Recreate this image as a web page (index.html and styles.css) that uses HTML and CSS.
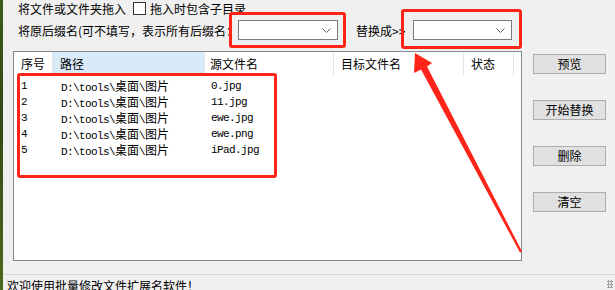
FILE: index.html
```html
<!DOCTYPE html>
<html lang="zh-CN">
<head>
    <meta charset="UTF-8">
    <title>批量修改文件扩展名</title>
    <link rel="stylesheet" href="styles.css">
</head>
<body>
    <div class="desktop"></div>
    <div class="window">
        <div class="row-drop">
            <span>将文件或文件夹拖入</span>
            <span class="checkbox"></span>
            <span>拖入时包含子目录</span>
        </div>

        <div class="row-ext">
            <span class="ext-label">将原后缀名(可不填写，表示所有后缀名：</span>
            <div class="combo combo-from">
                <svg class="chevron" width="9" height="5" viewBox="0 0 9 5"><polyline points="0.5,0.5 4.5,4.5 8.5,0.5" fill="none" stroke="#606060" stroke-width="1"/></svg>
            </div>
            <span class="to-label">替换成&gt;&gt;</span>
            <div class="combo combo-to">
                <svg class="chevron" width="9" height="5" viewBox="0 0 9 5"><polyline points="0.5,0.5 4.5,4.5 8.5,0.5" fill="none" stroke="#606060" stroke-width="1"/></svg>
            </div>
        </div>

        <div class="main">
            <div class="list">
                <div class="list-head">
                    <div class="col c-no">序号</div>
                    <div class="col c-path hover">路径</div>
                    <div class="col c-src">源文件名</div>
                    <div class="col c-dst">目标文件名</div>
                    <div class="col c-state">状态</div>
                </div>
                <div class="list-body">
                    <div class="list-row">
                        <div class="cell c-no">1</div>
                        <div class="cell c-path">D:\tools\<span class="cjk">桌面</span>\<span class="cjk">图片</span></div>
                        <div class="cell c-src">0.jpg</div>
                    </div>
                    <div class="list-row">
                        <div class="cell c-no">2</div>
                        <div class="cell c-path">D:\tools\<span class="cjk">桌面</span>\<span class="cjk">图片</span></div>
                        <div class="cell c-src">11.jpg</div>
                    </div>
                    <div class="list-row">
                        <div class="cell c-no">3</div>
                        <div class="cell c-path">D:\tools\<span class="cjk">桌面</span>\<span class="cjk">图片</span></div>
                        <div class="cell c-src">ewe.jpg</div>
                    </div>
                    <div class="list-row">
                        <div class="cell c-no">4</div>
                        <div class="cell c-path">D:\tools\<span class="cjk">桌面</span>\<span class="cjk">图片</span></div>
                        <div class="cell c-src">ewe.png</div>
                    </div>
                    <div class="list-row">
                        <div class="cell c-no">5</div>
                        <div class="cell c-path">D:\tools\<span class="cjk">桌面</span>\<span class="cjk">图片</span></div>
                        <div class="cell c-src">iPad.jpg</div>
                    </div>
                </div>
            </div>

            <div class="buttons">
                <div class="btn">预览</div>
                <div class="btn">开始替换</div>
                <div class="btn">删除</div>
                <div class="btn">清空</div>
            </div>
        </div>

        <div class="status">欢迎使用批量修改文件扩展名软件！</div>
        <div class="grip"></div>
    </div>

    <!-- red annotations drawn over the screenshot -->
    <div class="mark mark-from"></div>
    <div class="mark mark-to"></div>
    <div class="mark mark-rows"></div>
    <svg class="arrow" width="615" height="290" viewBox="0 0 615 290">
        <polygon points="415,53 432,63 427,66.5 522,251.5 520,252.5 421,69.5 414,73" fill="#fe2418"/>
    </svg>
</body>
</html>
```

FILE: styles.css
```css
body {
    margin: 0;
    width: 615px;
    height: 290px;
    overflow: hidden;
    display: flex;
    font-family: "Noto Sans CJK SC", "Noto Sans", sans-serif;
    font-size: 12px;
    color: #000;
    background: #f0f0f0;
}
.desktop {
    width: 3px;
    background: linear-gradient(#3c5a1c, #2f4a14 40%, #3f5a18 70%, #4a6a1e);
}
.window {
    flex: 1;
    display: flex;
    flex-direction: column;
    background: #f0f0f0;
    position: relative;
    overflow: hidden;
}
.window > div {
    flex-shrink: 0;
}
.row-drop {
    height: 17px;
    display: flex;
    align-items: center;
    padding-left: 15px;
    white-space: nowrap;
}
.checkbox {
    width: 11px;
    height: 11px;
    border: 1px solid #333;
    background: #fff;
    margin: 0 4px 0 7px;
}
.row-ext {
    height: 26px;
    display: flex;
    align-items: center;
    padding-left: 15px;
    white-space: nowrap;
}
.ext-label {
    width: 220px;
    overflow: hidden;
}
.combo {
    height: 20px;
    box-sizing: border-box;
    border: 1px solid #7a7a7a;
    background: #fff;
    display: flex;
    align-items: center;
    justify-content: flex-end;
    padding-right: 6px;
}
.combo-from {
    width: 100px;
}
.combo-to {
    width: 99px;
}
.to-label {
    margin-left: 18px;
    width: 57px;
}
.chevron {
    display: block;
}
.main {
    display: flex;
    margin-top: 8px;
    height: 210px;
}
.list {
    margin-left: 10px;
    width: 509px;
    height: 210px;
    box-sizing: border-box;
    border: 1px solid #828790;
    background: #fff;
}
.list-head {
    display: flex;
    height: 24px;
}
.list-head .col {
    box-sizing: border-box;
    border-right: 1px solid #e5e5e5;
    height: 24px;
    line-height: 24px;
    padding-left: 7px;
}
.list-head .hover {
    background: #d9ebf9;
    border-right-color: #d9ebf9;
}
.c-no { width: 39px; }
.c-path { width: 152px; }
.c-src { width: 129px; }
.c-dst { width: 130px; }
.c-state { width: 50px; }
.list-head .c-src { padding-left: 5px; }
.list-body {
    padding-top: 2px;
}
.list-row {
    display: flex;
    height: 16px;
    line-height: 16px;
    font-family: "Liberation Mono", "Noto Sans CJK SC", monospace;
    font-size: 11px;
    letter-spacing: -0.6px;
    white-space: nowrap;
}
.list-row .c-no { padding-left: 7px; box-sizing: border-box; }
.list-row .c-path { padding-left: 8px; box-sizing: border-box; }
.list-row .c-src { padding-left: 6px; box-sizing: border-box; }
.cjk {
    font-family: "Noto Sans CJK SC", sans-serif;
    font-size: 12px;
    letter-spacing: 0;
}
.buttons {
    margin-left: 11px;
    padding-top: 3px;
    display: flex;
    flex-direction: column;
    gap: 26px;
}
.btn {
    width: 73px;
    height: 20px;
    box-sizing: border-box;
    border: 1px solid #adadad;
    background: #e1e1e1;
    text-align: center;
    line-height: 18px;
}
.status {
    margin-top: 13px;
    border-top: 1px solid #d7d7d7;
    padding: 3px 0 0 4px;
    line-height: 16px;
    white-space: nowrap;
}
.grip {
    position: absolute;
    right: 2px;
    bottom: 2px;
    width: 6px;
    height: 8px;
    background: radial-gradient(circle, #a0a0a0 1px, transparent 1.2px) 0 0 / 3px 3px;
}
.mark {
    position: absolute;
    box-sizing: border-box;
    border: 3px solid #fe2418;
    border-radius: 3px;
}
.mark-from {
    left: 229px;
    top: 12px;
    width: 117px;
    height: 36px;
}
.mark-to {
    left: 401px;
    top: 9px;
    width: 121px;
    height: 40px;
}
.mark-rows {
    left: 17px;
    top: 73px;
    width: 260px;
    height: 105px;
}
.arrow {
    position: absolute;
    left: 0;
    top: 0;
}
```
